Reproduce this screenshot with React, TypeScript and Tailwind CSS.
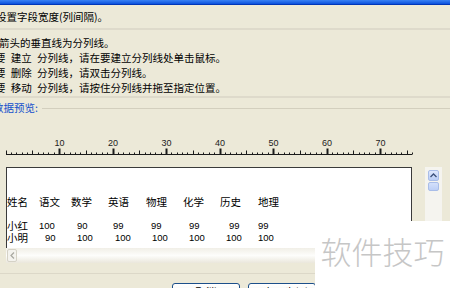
import React from 'react';

// ruler: one tick per character, 10 chars ~ 53.5px
const CH = 5.35;
const X0 = 5.5;
const ticks = Array.from({ length: 77 }, (_, i) => i);

const Ruler = () => (
    <svg width={450} height={40} className="block">
        <line x1={6} y1={36.5} x2={412} y2={36.5} stroke="#1a1a1a" strokeWidth={1} />
        {ticks.map((i) => {
            const x = Math.round(X0 + i * CH) + 0.5;
            const major = i % 10 === 0 && i > 0;
            const h = major ? 6 : i % 5 === 0 ? 4 : 2;
            return (
                <line
                    key={i}
                    x1={x}
                    y1={36.5 - h}
                    x2={x}
                    y2={36.5}
                    stroke="#1a1a1a"
                    strokeWidth={major ? 2 : 1}
                />
            );
        })}
        {[10, 20, 30, 40, 50, 60, 70].map((n) => (
            <text
                key={n}
                x={X0 + n * CH + 0.5}
                y={28}
                fontSize={9}
                textAnchor="middle"
                fill="#222"
                fontFamily="Liberation Sans, Arial, sans-serif"
            >
                {n}
            </text>
        ))}
    </svg>
);

const Num = ({ children, className }: { children: React.ReactNode; className: string }) => (
    <span className={`shrink-0 text-[9.5px] font-['Liberation_Sans',sans-serif] ${className}`}>{children}</span>
);

const PreviewRows = () => (
    <div className="pt-[27px] text-[10.5px] leading-[12px] text-black">
        <div className="flex h-[14px] items-center whitespace-nowrap">
            <span className="w-[32px] shrink-0">姓名</span>
            <span className="w-[32px] shrink-0">语文</span>
            <span className="w-[37px] shrink-0">数学</span>
            <span className="w-[38px] shrink-0">英语</span>
            <span className="w-[37px] shrink-0">物理</span>
            <span className="w-[37px] shrink-0">化学</span>
            <span className="w-[38px] shrink-0">历史</span>
            <span className="shrink-0">地理</span>
        </div>
        <div className="mt-[11px] flex h-[12px] items-center whitespace-nowrap">
            <span className="w-[32px] shrink-0">小红</span>
            <Num className="w-[38px]">100</Num>
            <Num className="w-[36px]">90</Num>
            <Num className="w-[38px]">99</Num>
            <Num className="w-[38px]">99</Num>
            <Num className="w-[40px]">99</Num>
            <Num className="w-[29px]">99</Num>
            <Num className="">99</Num>
        </div>
        <div className="flex h-[12px] items-center whitespace-nowrap">
            <span className="w-[38px] shrink-0">小明</span>
            <Num className="w-[32px]">90</Num>
            <Num className="w-[38px]">100</Num>
            <Num className="w-[37px]">100</Num>
            <Num className="w-[37px]">100</Num>
            <Num className="w-[37px]">100</Num>
            <Num className="w-[32px]">100</Num>
            <Num className="">100</Num>
        </div>
    </div>
);

export default function App() {
    return (
        <div className="relative h-[288px] w-[450px] overflow-hidden bg-[#ece9d8] font-['Noto_Sans_CJK_SC',sans-serif] text-black">
            {/* window title bar edge */}
            <div className="h-[5px] border-b border-[#0036b8] bg-gradient-to-b from-[#3a82f4] to-[#0a4fdc]" />

            <div className="flex h-[23px] items-center whitespace-nowrap text-[10.5px]">
                <span className="-ml-[4px]">设置字段宽度(列间隔)。</span>
            </div>
            <div className="h-[2px] bg-[#dedacb]" />

            {/* instructions */}
            <div className="whitespace-nowrap pt-[5px] text-[10.5px] leading-[15px]">
                <div className="-ml-[1px]">箭头的垂直线为分列线。</div>
                <div className="-ml-[5px]">要{'\u2002'}建立{'\u2002'}分列线，请在要建立分列线处单击鼠标。</div>
                <div className="-ml-[5px]">要{'\u2002'}删除{'\u2002'}分列线，请双击分列线。</div>
                <div className="-ml-[5px]">要{'\u2002'}移动{'\u2002'}分列线，请按住分列线并拖至指定位置。</div>
            </div>
            <div className="mt-[1px] h-[2px] bg-[#dedacb]" />

            {/* group caption */}
            <div className="flex h-[20px] items-center">
                <span className="-ml-[7px] whitespace-nowrap text-[10.5px] text-[#1450cc]">数据预览:</span>
                <div className="ml-[4px] h-px flex-1 bg-[#d3cfbe]" />
            </div>

            <Ruler />

            {/* preview area */}
            <div className="mt-[9px] flex">
                <div className="ml-[6px] flex w-[406px] flex-col">
                    <div className="h-[81px] overflow-hidden border-l border-r border-t border-[#3a3a3a] bg-white">
                        <PreviewRows />
                    </div>
                    <div className="flex h-[15px] items-center bg-gradient-to-b from-[#f1efe7] via-[#fdfdfb] to-[#eae7dc] pl-[1px]">
                        <div className="flex h-[13px] w-[10px] items-center justify-center rounded-[2px] border border-[#d5d2c6] bg-[#f4f3ee] text-[#a8a8a0]">
                            <svg width={5} height={7} viewBox="0 0 5 7">
                                <path d="M4 0.5 L1 3.5 L4 6.5" fill="none" stroke="currentColor" strokeWidth={1.2} />
                            </svg>
                        </div>
                    </div>
                </div>
                <div className="ml-[13px] flex h-[96px] w-[17px] flex-col items-center bg-[#f5f4ef] pt-[3px]">
                    <div className="flex h-[11px] w-[11px] items-center justify-center rounded-[2px] border border-[#a9bde8] bg-gradient-to-b from-[#dfe8fd] to-[#b9cdf6]">
                        <svg width={7} height={5} viewBox="0 0 7 5">
                            <path d="M0.5 4 L3.5 1 L6.5 4" fill="none" stroke="#3a4f7a" strokeWidth={1.3} />
                        </svg>
                    </div>
                    <div className="mt-px h-[9px] w-[11px] rounded-[2px] border border-[#a9bde8] bg-gradient-to-b from-[#d4e0fb] to-[#bccff6]" />
                </div>
            </div>

            <div className="mt-[10px] h-px bg-[#dcd8c8]" />

            {/* dialog buttons */}
            <div className="mt-[9px] flex gap-[8px] pl-[172px]">
                <div className="flex h-[21px] w-[68px] justify-center rounded-[3px] border border-[#1c4f8a] bg-gradient-to-b from-white to-[#ecebe4] pt-[2px] text-[10.5px] leading-[12px]">
                    取消
                </div>
                <div className="flex h-[21px] w-[68px] justify-center whitespace-nowrap rounded-[3px] border border-[#1c4f8a] bg-gradient-to-b from-white to-[#ecebe4] pt-[2px] text-[10.5px] leading-[12px]">
                    &lt; 上一步(B)
                </div>
            </div>

            {/* watermark */}
            <div className="absolute left-[315px] top-[221px] flex h-[67px] w-[135px] items-center justify-center bg-white pb-[6px] text-[31px] font-light tracking-[0px] text-[#c6c6c6]">
                软件技巧
            </div>
        </div>
    );
}
